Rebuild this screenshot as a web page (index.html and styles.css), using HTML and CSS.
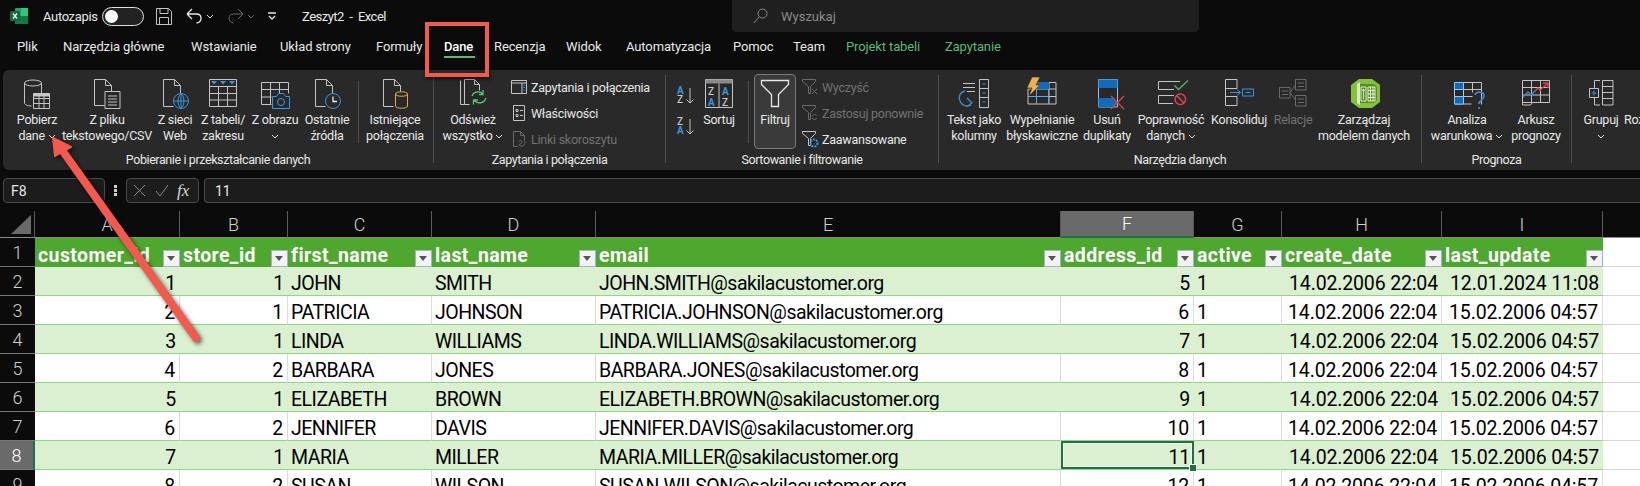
FILE: index.html

```html
<!DOCTYPE html>
<html lang="pl">
<head>
    <meta charset="UTF-8">
    <title>Zeszyt2 - Excel</title>
    <link rel="stylesheet" href="styles.css">
</head>
<body>

<div class="titlebar">
    <svg class="logo" width="18" height="16" viewBox="0 0 18 16"><rect x="5" y="0" width="13" height="16" rx="1" fill="#21a366"/><rect x="11" y="0" width="7" height="8" fill="#33c481"/><rect x="5" y="8" width="13" height="8" fill="#107c41"/><rect x="0" y="3" width="10" height="10" rx="1" fill="#0e6b3a"/><path d="M3 5.500l4 5M7 5.500l-4 5" stroke="#fff" stroke-width="1.3"/></svg>
    <span class="autosave">Autozapis</span>
    <span class="toggle"><span class="knob"></span></span>
    <svg class="qa-save" width="16" height="17" viewBox="0 0 16 17"><path d="M.5.5h12l3 3v13H.5zM4 .5v5h8v-5M3.500 16.500v-7h9v7" class="st"/></svg>
    <svg class="qa-undo" width="17" height="16" viewBox="0 0 17 16"><path d="M1 6h9.500c6 0 6 8 0 9M1 6l5-5M1 6l5 5" class="st st-w"/></svg>
    <svg class="chev qa-chev" viewBox="0 0 8 5"><path d="M1 1l3 3 3-3"/></svg>
    <svg class="qa-redo" width="17" height="16" viewBox="0 0 17 16"><path d="M16 6H6.500c-6 0-6 8 0 9M16 6l-5-5M16 6l-5 5" class="st dimline"/></svg>
    <svg class="chev dim-chev qa-chev" viewBox="0 0 8 5"><path d="M1 1l3 3 3-3"/></svg>
    <svg class="qa-more" width="10" height="9" viewBox="0 0 10 9"><path d="M1 1h8M2 4l3 3 3-3" class="st st-w"/></svg>
    <span class="doc">Zeszyt2&nbsp; - &nbsp;Excel</span>
    <div class="search">
        <svg width="15" height="16" viewBox="0 0 15 16"><circle cx="9.500" cy="5.500" r="4.500" class="st grey"/><path d="M6 9l-5 6" class="st grey"/></svg>
        <span>Wyszukaj</span>
    </div>
</div>

<nav class="tabs">
    <span>Plik</span>
    <span>Narzędzia główne</span>
    <span>Wstawianie</span>
    <span>Układ strony</span>
    <span>Formuły</span>
    <span class="active">Dane</span>
    <span>Recenzja</span>
    <span>Widok</span>
    <span>Automatyzacja</span>
    <span>Pomoc</span>
    <span>Team</span>
    <span class="ctx">Projekt tabeli</span>
    <span class="ctx">Zapytanie</span>
</nav>

<div class="ribbon">
    <section class="group g-get">
        <div class="tools">
            <div class="tool">
                <svg class="ico" viewBox="0 0 30 30"><ellipse cx="11" cy="4" rx="8.500" ry="3" class="st"/><path d="M2.500 4v20c0 1.500 3 3 7 3M19.500 4v10" class="st"/><path d="M11.500 14.500h16v15h-16zM11.500 19.500h16M11.500 24.500h16M17 14.500v15M22 14.500v15" class="st"/><path d="M11.500 14.500h16v3h-16z" fill="#c8c8c8"/></svg>
                <span>Pobierz</span>
                <span>dane <svg class="chev" viewBox="0 0 8 5"><path d="M1 1l3 3 3-3"/></svg></span>
            </div>
            <div class="tool">
                <svg class="ico" viewBox="0 0 30 30"><path d="M2.500.5h11l6 6v6M13.500.500v6h6M2.500.5v26h10" class="st"/><path d="M13 12.500h15v17H13zM16 17h9M16 20h9M16 23h9M16 26h9" class="st"/></svg>
                <span>Z pliku</span>
                <span>tekstowego/CSV</span>
            </div>
            <div class="tool">
                <svg class="ico" viewBox="0 0 30 30"><path d="M3.500.5h11l6 6v8M14.500.500v6h6M3.500.5v27h10" class="st"/><circle cx="21" cy="22" r="7.500" class="st bl"/><path d="M13.500 22h15M21 14.500v15M21 14.500c-4 4-4 11 0 15M21 14.500c4 4 4 11 0 15" class="st bl"/></svg>
                <span>Z sieci</span>
                <span>Web</span>
            </div>
            <div class="tool">
                <svg class="ico" viewBox="0 0 30 30"><path d="M1.500.5h27v27h-27zM1.500 7.500h27M1.500 14.500h27M1.500 21h27M10.500 7.500v20M19.500 7.500v20" class="st"/><path d="M3 2h6l-3 3.500zM12 2h6l-3 3.500zM21 2h6l-3 3.500z" fill="#3a96dd"/></svg>
                <span>Z tabeli/</span>
                <span>zakresu</span>
            </div>
            <div class="tool">
                <svg class="ico" viewBox="0 0 30 30"><path d="M1.500 3.500h27v11M1.500 3.500v22h10M1.500 10.500h27M1.500 18h10M10.500 3.500v22M19.500 3.500v11" class="st"/><path d="M12.500 17.500h4l2-3h5l2 3h4v12h-17z" fill="#292929" stroke="#3a96dd"/><circle cx="21" cy="23" r="3.500" class="st bl"/></svg>
                <span>Z obrazu</span>
                <span><svg class="chev" viewBox="0 0 8 5"><path d="M1 1l3 3 3-3"/></svg></span>
            </div>
            <div class="tool">
                <svg class="ico" viewBox="0 0 30 30"><path d="M3.500.5h11l6 6v8M14.500.500v6h6M3.500.5v27h10" class="st"/><circle cx="21" cy="22" r="7.500" class="st bl"/><path d="M21 17.500V22.500h4" class="st st-w"/></svg>
                <span>Ostatnie</span>
                <span>źródła</span>
            </div>
            <div class="vsep"></div>
            <div class="tool">
                <svg class="ico" viewBox="0 0 30 30"><path d="M3.500.5h11l6 6v6M14.500.500v6h6M3.500.5v27h10" class="st"/><path d="M15.500 15c0-3 12-3 12 0v12c0 3-12 3-12 0zM15.500 15c0 3 12 3 12 0" fill="none" stroke="#e3a84e"/></svg>
                <span>Istniejące</span>
                <span>połączenia</span>
            </div>
        </div>
        <div class="glabel">Pobieranie i przekształcanie danych</div>
    </section>
    <div class="sep"></div>

    <section class="group g-query">
        <div class="tools">
            <div class="tool">
                <svg class="ico" viewBox="0 0 30 30"><path d="M2.500 1.500v24h4M6.500.5h10l5 5v6M16.500.5v5h5M6.500.5v25h5" class="st"/><path d="M14 17c2-5 8-5 11-2M28 19c-2 6-9 6-12 2M25 11v4.500h-4M15.500 25.500V21h4.500" fill="none" stroke="#55c777" stroke-width="1.300"/></svg>
                <span>Odśwież</span>
                <span>wszystko <svg class="chev" viewBox="0 0 8 5"><path d="M1 1l3 3 3-3"/></svg></span>
            </div>
            <div class="list">
                <div class="item"><svg class="sm" viewBox="0 0 16 16"><path d="M.5 1.500h15v13H.5zM.5 4h15M11 4v10.500" class="st"/><path d="M12.500 6h1.500M12.500 8.500h1.500M12.500 11h1.500" stroke="#3a96dd"/></svg>Zapytania i połączenia</div>
                <div class="item"><svg class="sm" viewBox="0 0 16 16"><path d="M2.500.5h11v15h-11zM5 4.500h2v2H5zM5 9.500h2v2H5zM9 5.500h3M9 10.500h3" class="st"/></svg>Właściwości</div>
                <div class="item dim"><svg class="sm" viewBox="0 0 16 16"><path d="M2.500.5h7l4 4v5M9.500.5v4h4M2.500.5v15h4" class="st dimline"/><path d="M8 11c0-2 3-2 3 0s-3 2-3 3 3 2 5 0 1-4 0-4" class="st dimline"/></svg>Linki skoroszytu</div>
            </div>
        </div>
        <div class="glabel">Zapytania i połączenia</div>
    </section>
    <div class="sep"></div>

    <section class="group g-sort">
        <div class="tools">
            <div class="sort-pair">
                <svg width="17" height="18" viewBox="0 0 17 18"><text x="0" y="8" class="az azb">A</text><text x="0" y="17" class="az">Z</text><path d="M13 2v15M9.500 13.500L13 17l3.500-3.500" class="st"/></svg>
                <svg width="17" height="18" viewBox="0 0 17 18"><text x="0" y="8" class="az">Z</text><text x="0" y="17" class="az azb">A</text><path d="M13 2v15M9.500 13.500L13 17l3.500-3.500" class="st"/></svg>
            </div>
            <div class="tool">
                <svg class="ico" viewBox="0 0 30 30"><path d="M1.500.5h27v28h-27zM15 4.500v24" class="st"/><path d="M1.500.5h27v4h-27z" fill="#8a8a8a"/><text x="4" y="16" class="az">Z</text><text x="4" y="27" class="az azb">A</text><text x="18" y="16" class="az azb">A</text><text x="18" y="27" class="az">Z</text></svg>
                <span>Sortuj</span>
            </div>
            <div class="vsep short"></div>
            <div class="tool filter">
                <svg class="ico" viewBox="0 0 30 30"><path d="M1.500 1.500h27v4L18.500 15.500v12h-7v-12L1.500 5.500z" class="st st-w"/></svg>
                <span>Filtruj</span>
            </div>
            <div class="list">
                <div class="item dim"><svg class="sm" viewBox="0 0 16 16"><path d="M.5.5h13v2L8.500 7.500v7h-2v-7L.5 2.500z" class="st dimline"/><path d="M10 10l5 5M15 10l-5 5" class="st dimline"/></svg>Wyczyść</div>
                <div class="item dim"><svg class="sm" viewBox="0 0 16 16"><path d="M.5.5h13v2L8.500 7.500v7h-2v-7L.5 2.500z" class="st dimline"/><path d="M10 11c1-2 4-2 5 0M15 13c-1 2-4 2-5 0" class="st dimline"/></svg>Zastosuj ponownie</div>
                <div class="item"><svg class="sm" viewBox="0 0 16 16"><path d="M.5.5h13v2L8.500 7.500v7h-2v-7L.5 2.500z" class="st"/><circle cx="12" cy="12" r="3.500" fill="none" stroke="#3a96dd" stroke-width="2" stroke-dasharray="2 1"/></svg>Zaawansowane</div>
            </div>
        </div>
        <div class="glabel">Sortowanie i filtrowanie</div>
    </section>
    <div class="sep"></div>

    <section class="group g-tools">
        <div class="tools">
            <div class="tool">
                <svg class="ico" viewBox="0 0 30 30"><path d="M20.500.5h9v28h-9zM20.500 9.500h9M20.500 18.500h9" class="st"/><path d="M23.500 5h3M23.500 14h3M23.500 23h3" stroke="#3a96dd"/><path d="M4 4.500h12M4 8.500h12M8 12.500h8" class="st"/><path d="M6 12c-5 1-7 6-5 10 2 4 6 6 11 4M8 19l5 5-6 4" fill="none" stroke="#3a86c8" stroke-width="1.400"/></svg>
                <span>Tekst jako</span>
                <span>kolumny</span>
            </div>
            <div class="tool">
                <svg class="ico" viewBox="0 0 30 30"><path d="M10 3.500h19v21.500h-28v-15h28M1 17.500h28M22 3.500v21.500" class="st"/><path d="M10 3h12v7H10z" fill="#0f6cbd"/><path d="M9.500 10v15M1.500 17.500h20M21.500 10v15" stroke="#5aa6e6" fill="none"/><path d="M5-2h8L9 6h4L2 17l3-8H0z" fill="#f2b04a" stroke="#292929" stroke-width=".6"/></svg>
                <span>Wypełnianie</span>
                <span>błyskawiczne</span>
            </div>
            <div class="tool">
                <svg class="ico" viewBox="0 0 30 30"><path d="M6.500.5h19v27.500h-19z" fill="none" stroke="#8fc4ee"/><path d="M6.500.5h19V9h-19zM6.500 19h14l5 4.500-5 4.500h-14z" fill="#0f6cbd"/><path d="M19 17l13 13M32 17L19 30" stroke="#d9444c" stroke-width="1.300" fill="none"/></svg>
                <span>Usuń</span>
                <span>duplikaty</span>
            </div>
            <div class="tool">
                <svg class="ico" viewBox="0 0 30 30"><path d="M24 2.500H2.500v8H18M18 16.500H2.500v8H17" class="st"/><path d="M18.500 6.500l4 4L32 1.500" fill="none" stroke="#4fb56b" stroke-width="1.300"/><circle cx="24.300" cy="20.300" r="5.300" fill="none" stroke="#e0444c" stroke-width="1.400"/><path d="M20.500 16.500l7.500 7.500" stroke="#e0444c" stroke-width="1.400"/></svg>
                <span>Poprawność</span>
                <span>danych <svg class="chev" viewBox="0 0 8 5"><path d="M1 1l3 3 3-3"/></svg></span>
            </div>
            <div class="tool">
                <svg class="ico" viewBox="0 0 30 30"><path d="M13 9.500V.5H1.500v26H13v-9M1.500 9.500H13M1.500 17.500H13" class="st"/><path d="M6 13.500h10M13 10.500l3.500 3-3.500 3M18.500 10h11v7h-11zM21.500 13.500h5" fill="none" stroke="#3a96dd"/></svg>
                <span>Konsoliduj</span>
            </div>
            <div class="tool dim">
                <svg class="ico" viewBox="0 0 30 30"><path d="M17.500.5h10.500v10.500H17.500zM17.500 16.500h10.500v10.500H17.500zM1.500 8.500H12V19H1.500zM20 4h6M20 7.500h6M20 20h6M20 23.500h6M4 12h6M4 15.500h6M12 13.500L17.500 6M12 13.500l5.500 7.500" class="st dimline"/></svg>
                <span>Relacje</span>
            </div>
            <div class="tool">
                <svg class="ico" viewBox="0 0 30 30"><path d="M10 0h13l8 6v17l-8 6H10l-8-6V6z" fill="#84c23c"/><path d="M8 5l3-2v23l-3-2z" fill="#d8ecc0"/><path d="M11 5h14l3 3v13l-3 3H11z" fill="#558f1f"/><path d="M12 8h5v14h-5z" fill="none" stroke="#fff" stroke-width=".8"/><path d="M14.500 10v10M13 12l1.500-2 1.500 2" stroke="#fff" stroke-width=".7" fill="none"/><path d="M19 8h7v14h-7zM21.500 8v14M24 8v14M19 11.500h7M19 15h7M19 18.500h7" fill="none" stroke="#fff" stroke-width=".8"/></svg>
                <span>Zarządzaj</span>
                <span>modelem danych</span>
            </div>
        </div>
        <div class="glabel">Narzędzia danych</div>
    </section>
    <div class="sep"></div>

    <section class="group g-forecast">
        <div class="tools">
            <div class="tool">
                <svg class="ico" viewBox="0 0 30 30"><path d="M2.500 3.500h27v22M2.500 3.500v21.500h17M2.500 10.500h27M2.500 17.500h18M11.500 3.500v21.500M20.500 3.500v10" class="st"/><path d="M2.500 3.500h9v7h-9zM2.500 17.500h9v7.500h-9z" fill="#0f6cbd" stroke="#8fc4ee"/><path d="M23 16c1-4 9-4 9 1 0 4-5 4-5 8M27 28v2" fill="none" stroke="#3a86c8" stroke-width="1.800"/></svg>
                <span>Analiza</span>
                <span>warunkowa <svg class="chev" viewBox="0 0 8 5"><path d="M1 1l3 3 3-3"/></svg></span>
            </div>
            <div class="tool">
                <svg class="ico" viewBox="0 0 30 30"><path d="M1.500 1.500h27v22h-27zM1.500 8.500h27M1.500 16h27M10.500 1.500v22M19.500 1.500v22M1.500 23.500v2.500h8l2-2.500" class="st"/><path d="M2 18l5-5 3 3 5-5" fill="none" stroke="#3a86c8" stroke-width="1.400"/><path d="M15 11l2-2 2 2 7-6M22 4h5v5" fill="none" stroke="#e0444c" stroke-width="1.400"/></svg>
                <span>Arkusz</span>
                <span>prognozy</span>
            </div>
        </div>
        <div class="glabel">Prognoza</div>
    </section>
    <div class="sep"></div>

    <section class="group g-outline">
        <div class="tools">
            <div class="tool">
                <svg class="ico" viewBox="0 0 30 30"><path d="M16.500 1.500h10.500v24.500H16.500zM16.500 7.500h10.500M16.500 13.500h10.500M16.500 19.500h10.500M14 1.500H8.500v7.500M14 26H8.500v-8" class="st"/><path d="M3.500 9.500h9v9h-9z" class="st"/><path d="M8 11.500v5M5.500 14h5" stroke="#3a96dd"/></svg>
                <span>Grupuj</span>
                <span><svg class="chev" viewBox="0 0 8 5"><path d="M1 1l3 3 3-3"/></svg></span>
            </div>
            <div class="tool clip"><span>Rozgrupuj</span></div>
        </div>
    </section>
</div>

<div class="formulabar">
    <div class="namebox">F8</div>
    <svg class="dots" width="3" height="11" viewBox="0 0 3 11"><path d="M0 0h3v3H0zM0 4h3v3H0zM0 8h3v3H0z" fill="#d0d0d0"/></svg>
    <div class="fxbox">
        <svg width="13" height="13" viewBox="0 0 13 13"><path d="M1 1l11 11M12 1L1 12" class="st grey"/></svg>
        <svg width="14" height="13" viewBox="0 0 14 13"><path d="M1 7l4 5 8-11" class="st grey"/></svg>
        <span class="fx">fx</span>
    </div>
    <div class="input">11</div>
</div>

<div class="sheet">
    <table>
        <colgroup>
            <col class="c-rh"><col class="c-a"><col class="c-b"><col class="c-c"><col class="c-d"><col class="c-e"><col class="c-f"><col class="c-g"><col class="c-h"><col class="c-i"><col class="c-j">
        </colgroup>
        <thead>
            <tr class="cols">
                <th class="corner"><span class="tri"></span></th>
                <th>A</th><th>B</th><th>C</th><th>D</th><th>E</th><th class="cur">F</th><th>G</th><th>H</th><th>I</th><th class="blank"></th>
            </tr>
        </thead>
        <tbody>
            <tr class="head">
                <th class="rh">1</th>
                <td><div class="hd">customer_id<span class="fb"></span></div></td>
                <td><div class="hd">store_id<span class="fb"></span></div></td>
                <td><div class="hd">first_name<span class="fb"></span></div></td>
                <td><div class="hd">last_name<span class="fb"></span></div></td>
                <td><div class="hd">email<span class="fb"></span></div></td>
                <td><div class="hd">address_id<span class="fb"></span></div></td>
                <td><div class="hd">active<span class="fb"></span></div></td>
                <td><div class="hd">create_date<span class="fb"></span></div></td>
                <td><div class="hd">last_update<span class="fb"></span></div></td>
                <td class="out"></td>
            </tr>
            <tr class="band"><th class="rh">2</th><td class="n">1</td><td class="n">1</td><td>JOHN</td><td>SMITH</td><td>JOHN.SMITH@sakilacustomer.org</td><td class="n">5</td><td>1</td><td class="n">14.02.2006 22:04</td><td class="n">12.01.2024 11:08</td><td class="out"></td></tr>
            <tr class="plain"><th class="rh">3</th><td class="n">2</td><td class="n">1</td><td>PATRICIA</td><td>JOHNSON</td><td>PATRICIA.JOHNSON@sakilacustomer.org</td><td class="n">6</td><td>1</td><td class="n">14.02.2006 22:04</td><td class="n">15.02.2006 04:57</td><td class="out"></td></tr>
            <tr class="band"><th class="rh">4</th><td class="n">3</td><td class="n">1</td><td>LINDA</td><td>WILLIAMS</td><td>LINDA.WILLIAMS@sakilacustomer.org</td><td class="n">7</td><td>1</td><td class="n">14.02.2006 22:04</td><td class="n">15.02.2006 04:57</td><td class="out"></td></tr>
            <tr class="plain"><th class="rh">5</th><td class="n">4</td><td class="n">2</td><td>BARBARA</td><td>JONES</td><td>BARBARA.JONES@sakilacustomer.org</td><td class="n">8</td><td>1</td><td class="n">14.02.2006 22:04</td><td class="n">15.02.2006 04:57</td><td class="out"></td></tr>
            <tr class="band"><th class="rh">6</th><td class="n">5</td><td class="n">1</td><td>ELIZABETH</td><td>BROWN</td><td>ELIZABETH.BROWN@sakilacustomer.org</td><td class="n">9</td><td>1</td><td class="n">14.02.2006 22:04</td><td class="n">15.02.2006 04:57</td><td class="out"></td></tr>
            <tr class="plain"><th class="rh">7</th><td class="n">6</td><td class="n">2</td><td>JENNIFER</td><td>DAVIS</td><td>JENNIFER.DAVIS@sakilacustomer.org</td><td class="n">10</td><td>1</td><td class="n">14.02.2006 22:04</td><td class="n">15.02.2006 04:57</td><td class="out"></td></tr>
            <tr class="band"><th class="rh cur">8</th><td class="n">7</td><td class="n">1</td><td>MARIA</td><td>MILLER</td><td>MARIA.MILLER@sakilacustomer.org</td><td class="n sel">11</td><td>1</td><td class="n">14.02.2006 22:04</td><td class="n">15.02.2006 04:57</td><td class="out"></td></tr>
            <tr class="plain"><th class="rh">9</th><td class="n">8</td><td class="n">2</td><td>SUSAN</td><td>WILSON</td><td>SUSAN.WILSON@sakilacustomer.org</td><td class="n">12</td><td>1</td><td class="n">14.02.2006 22:04</td><td class="n">15.02.2006 04:57</td><td class="out"></td></tr>
        </tbody>
    </table>
</div>

<!-- adnotacje na zrzucie -->
<div class="redbox"></div>
<svg class="arrow" width="1640" height="486" viewBox="0 0 1640 486">
    <path d="M196 338L62 150" stroke="#f4594e" stroke-width="8" stroke-linecap="round" fill="none"/>
    <path d="M53 138L71 147L55 156z" fill="#f4594e" stroke="#f4594e" stroke-width="2" stroke-linejoin="round"/>
</svg>

</body>
</html>
```

FILE: styles.css

```css
* {
    box-sizing: border-box;
}
body {
    margin: 0;
    width: 1640px;
    height: 486px;
    overflow: hidden;
    position: relative;
    background-color: #0b0b0b;
    color: #e8e8e8;
    font-family: Roboto, sans-serif;
    font-size: 12.5px;
}
svg {
    display: block;
    flex: none;
    overflow: visible;
}
.st {
    fill: none;
    stroke: #c4c4c4;
}
.st-w {
    stroke: #e8e8e8;
    stroke-width: 1.3;
}
.bl {
    stroke: #3a96dd;
}
.grey {
    stroke: #8a8a8a;
}
.dimline {
    stroke: #6a6a6a;
}
.chev {
    display: inline-block;
    width: 8px;
    height: 5px;
    vertical-align: 1px;
}
.chev path {
    fill: none;
    stroke: #e0e0e0;
}
.dim-chev path {
    stroke: #666;
}

/* pasek tytulu */
.titlebar {
    height: 32px;
    display: flex;
    align-items: center;
    padding-left: 10px;
}
.autosave {
    margin-left: 15px;
    width: 52px;
    font-size: 13px;
    letter-spacing: -0.35px;
}
.toggle {
    margin-left: 7px;
    width: 42px;
    height: 19px;
    border: 1px solid #e0e0e0;
    border-radius: 10px;
    padding: 2px;
    background-color: #222;
}
.knob {
    display: block;
    width: 13px;
    height: 13px;
    border-radius: 50%;
    background-color: #fff;
}
.qa-save {
    margin-left: 12px;
}
.qa-undo {
    margin-left: 14px;
}
.qa-chev {
    margin-left: 3px;
}
.qa-redo {
    margin-left: 13px;
}
.qa-more {
    margin-left: 12px;
}
.doc {
    margin-left: 25px;
    width: 84px;
    font-size: 13px;
    letter-spacing: -0.5px;
    white-space: nowrap;
}
.search {
    margin-left: 346px;
    width: 467px;
    height: 32px;
    background-color: #1f1f1f;
    border-radius: 0 0 4px 4px;
    display: flex;
    align-items: center;
    gap: 13px;
    padding-left: 21px;
    color: #8a8a8a;
    font-size: 13px;
}

/* zakladki */
.tabs {
    height: 38px;
    display: grid;
    grid-template-columns: 46px 128px 89px 96px 68px 50px 72px 60px 107px 60px 53px 99px auto;
    align-items: center;
    padding: 0 0 10px 17px;
    font-size: 13px;
    letter-spacing: -0.12px;
    white-space: nowrap;
}
.tabs .active {
    position: relative;
    font-weight: 500;
    color: #fff;
}
.tabs .active::after {
    content: "";
    position: absolute;
    left: 0;
    bottom: -4px;
    width: 31px;
    height: 2px;
    background-color: #5fb878;
}
.tabs .ctx {
    color: #5cb87a;
}

/* wstazka */
.ribbon {
    margin-left: 3px;
    height: 100px;
    display: flex;
    background-color: #292929;
    border-radius: 6px 0 0 6px;
    overflow: hidden;
    letter-spacing: -0.25px;
}
.group {
    padding-top: 4px;
    flex: none;
}
.sep {
    flex: none;
    width: 1px;
    height: 88px;
    margin-top: 5px;
    background-color: #4d4d4d;
}
.tools {
    height: 78px;
    display: grid;
    align-items: start;
    justify-items: center;
    white-space: nowrap;
}
.g-get {
    width: 430px;
}
.g-get .tools {
    padding-left: 5px;
    grid-template-columns: 58px 82px 54px 42px 62px 42px 20px 54px;
}
.g-query {
    width: 231px;
}
.g-query .tools {
    padding-left: 6px;
    grid-template-columns: 66px auto;
}
.g-sort {
    width: 272px;
}
.g-sort .tools {
    grid-template-columns: 30px 46px 12px 42px auto;
}
.g-tools {
    width: 482px;
}
.g-tools .tools {
    padding-left: 5px;
    grid-template-columns: 60px 76px 54px 74px 62px 46px 96px;
}
.g-forecast {
    width: 149px;
}
.g-forecast .tools {
    padding-left: 6px;
    grid-template-columns: 78px 60px;
}
.g-outline {
    flex: 1;
    overflow: hidden;
}
.g-outline .tools {
    padding-left: 6px;
    grid-template-columns: 46px auto;
    justify-items: start;
}
.tool {
    display: flex;
    flex-direction: column;
    align-items: center;
    padding-top: 5px;
    width: 100%;
    line-height: 16px;
}
.tool span {
    display: block;
}
.ico {
    width: 30px;
    height: 30px;
    margin-bottom: 3px;
}
.dim,
.dim span {
    color: #727272;
}
.clip {
    padding-top: 38px;
    align-items: flex-start;
}
.filter {
    height: 75px;
    padding-top: 4px;
    border: 1px solid #7a7a7a;
    border-radius: 4px;
    background-color: #3a3a3a;
}
.vsep {
    width: 1px;
    height: 62px;
    margin-top: 7px;
    background-color: #4d4d4d;
}
.list {
    justify-self: start;
    padding-left: 5px;
}
.g-sort .list {
    padding-left: 6px;
}
.item {
    height: 26px;
    display: flex;
    align-items: center;
    gap: 4px;
}
.sm {
    width: 16px;
    height: 16px;
}
.sort-pair {
    display: flex;
    flex-direction: column;
    gap: 13px;
    padding: 12px 0 0 11px;
    justify-self: start;
}
.az {
    font-size: 10px;
    fill: #c8c8c8;
    font-weight: 500;
}
.azb {
    fill: #3a96dd;
    font-weight: 700;
}
.glabel {
    height: 16px;
    line-height: 16px;
    text-align: center;
    letter-spacing: -0.4px;
}

/* pasek formuly */
.formulabar {
    height: 41px;
    padding-top: 8px;
    display: flex;
    align-items: flex-start;
    padding-left: 3px;
}
.namebox,
.fxbox,
.input {
    height: 25px;
    border: 1px solid #4a4a4a;
    border-radius: 4px;
    background-color: #1c1c1c;
    display: flex;
    align-items: center;
    font-size: 14px;
}
.namebox {
    width: 102px;
    padding-left: 7px;
}
.dots {
    margin: 7px 9px 0;
}
.fxbox {
    width: 73px;
    gap: 9px;
    padding-left: 6px;
}
.fx {
    font-family: "Liberation Serif", serif;
    font-style: italic;
    font-size: 17px;
    color: #d8d8d8;
    margin-left: -1px;
}
.input {
    margin-left: 5px;
    flex: 1;
    border-right: none;
    border-radius: 4px 0 0 4px;
    padding-left: 10px;
}

/* arkusz */
.sheet {
    height: 275px;
    overflow: hidden;
}
table {
    width: 1640px;
    table-layout: fixed;
    border-collapse: separate;
    border-spacing: 0;
    font-size: 19.5px;
}
.c-rh { width: 35px; }
.c-a { width: 145px; }
.c-b { width: 108px; }
.c-c { width: 144px; }
.c-d { width: 164px; }
.c-e { width: 465px; }
.c-f { width: 133px; }
.c-g { width: 88px; }
.c-h { width: 160px; }
.c-i { width: 161px; }
.c-j { width: 37px; }
tr {
    height: 29px;
}
th, td {
    padding: 0;
    overflow: hidden;
    white-space: nowrap;
}
.cols {
    height: 27px;
}
.cols th {
    font-weight: 300;
    font-size: 18px;
    color: #d0d0d0;
    background-color: #0b0b0b;
    border-right: 1px solid #5a5a5a;
    border-bottom: 1px solid #8a8a8a;
}
.cols .cur {
    background-color: #6a6a6a;
    color: #fff;
    border-bottom: 2px solid #1f7145;
}
.cols .blank {
    border-right: none;
}
.corner {
    position: relative;
}
.tri {
    position: absolute;
    left: 11px;
    bottom: 3px;
    width: 0;
    height: 0;
    border-style: solid;
    border-width: 0 0 19px 20px;
    border-color: transparent transparent #6a6a6a transparent;
}
.rh {
    font-weight: 300;
    font-size: 18px;
    color: #d0d0d0;
    background-color: #0b0b0b;
    border-bottom: 1px solid #777;
}
.rh.cur {
    background-color: #6a6a6a;
    color: #fff;
    border-right: 2px solid #1f7145;
}
td {
    color: #000;
    padding: 4px 3px 0;
    letter-spacing: -0.5px;
}
.n {
    text-align: right;
    padding-right: 4px;
    letter-spacing: -0.15px;
}
.head td {
    background-color: #4ea72e;
    color: #fff;
    font-weight: 700;
    padding: 0 0 0 3px;
    letter-spacing: 0.4px;
}
.hd {
    display: flex;
    justify-content: space-between;
    align-items: flex-end;
    height: 28px;
}
.fb {
    flex: none;
    width: 17px;
    height: 17px;
    background-color: #f3f3f3;
    border: 1px solid #a9afc9;
    position: relative;
}
.fb::after {
    content: "";
    position: absolute;
    left: 3px;
    top: 5px;
    border-style: solid;
    border-width: 5px 4px 0;
    border-color: #555 transparent transparent;
}
.band td {
    background-color: #daf0d0;
    border-bottom: 1px solid #90d880;
}
.plain td {
    background-color: #fff;
    border-bottom: 1px solid #90d880;
    border-right: 1px solid #dcdcdc;
}
.head .out,
.band .out,
.plain .out {
    background-color: #fff;
    border-bottom: 1px solid #d8d8d8;
    border-right: none;
}
.sel {
    position: relative;
    box-shadow: inset 0 0 0 2px #1f7145, inset 0 0 0 3px #fff;
    overflow: visible;
}
.sel::after {
    content: "";
    position: absolute;
    right: -3px;
    bottom: -3px;
    width: 6px;
    height: 6px;
    background-color: #1f7145;
    border: 1px solid #fff;
}

/* adnotacje */
.redbox {
    position: absolute;
    left: 425px;
    top: 22px;
    width: 64px;
    height: 55px;
    border: 4px solid #f4594e;
    box-shadow: 1px 2px 4px rgba(0,0,0,0.6);
}
.arrow {
    position: absolute;
    left: 0;
    top: 0;
    filter: drop-shadow(2px 2px 2px rgba(0,0,0,0.6));
}
```
